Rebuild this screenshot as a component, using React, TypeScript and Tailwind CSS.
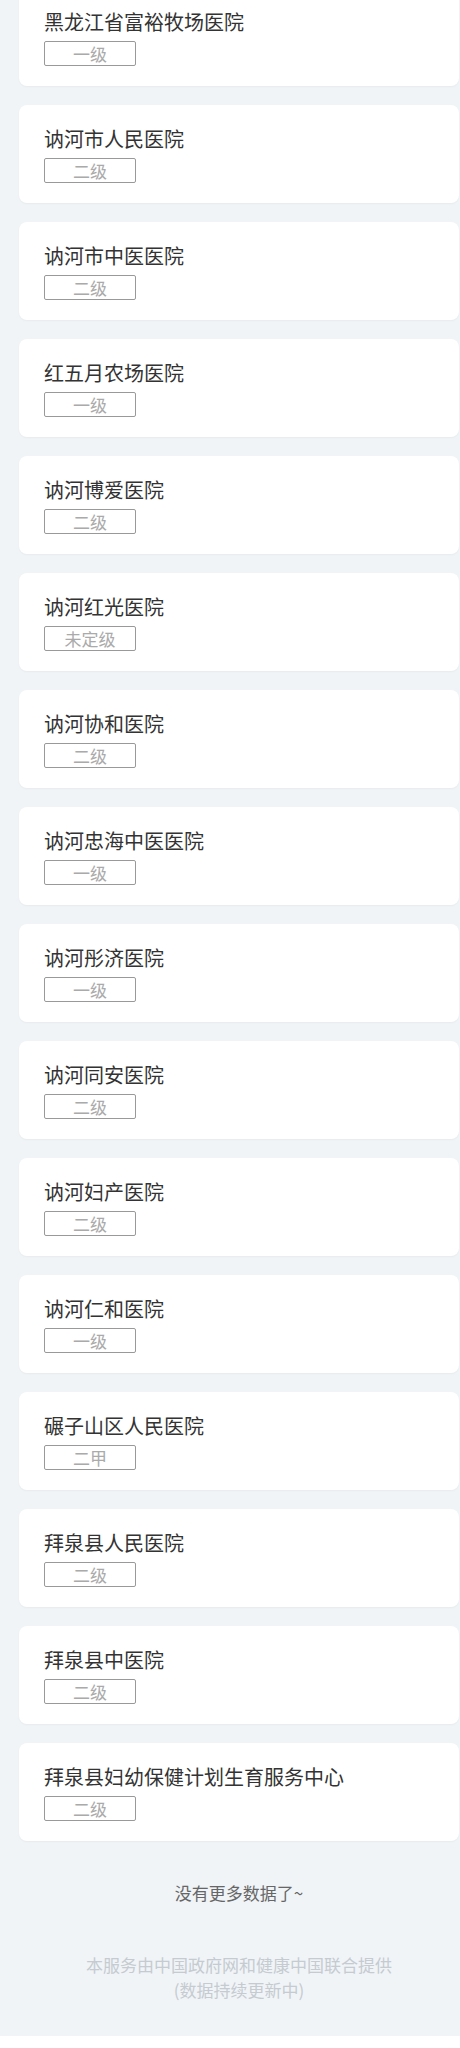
const hospitals = [
  { name: "黑龙江省富裕牧场医院", level: "一级" },
  { name: "讷河市人民医院", level: "二级" },
  { name: "讷河市中医医院", level: "二级" },
  { name: "红五月农场医院", level: "一级" },
  { name: "讷河博爱医院", level: "二级" },
  { name: "讷河红光医院", level: "未定级" },
  { name: "讷河协和医院", level: "二级" },
  { name: "讷河忠海中医医院", level: "一级" },
  { name: "讷河彤济医院", level: "一级" },
  { name: "讷河同安医院", level: "二级" },
  { name: "讷河妇产医院", level: "二级" },
  { name: "讷河仁和医院", level: "一级" },
  { name: "碾子山区人民医院", level: "二甲" },
  { name: "拜泉县人民医院", level: "二级" },
  { name: "拜泉县中医院", level: "二级" },
  { name: "拜泉县妇幼保健计划生育服务中心", level: "二级" },
];

const HospitalCard = ({ name, level }: { name: string; level: string }) => (
  <div className="flex flex-col items-start gap-[5px] rounded-lg bg-white pl-[25px] pr-4 pt-[20px] pb-[20px] shadow-[0_1px_2px_rgba(0,0,0,0.04)]">
    <p className="text-[20px] leading-[28px] text-[#333]">{name}</p>
    <span className="flex h-[25px] w-[92px] items-center justify-center rounded-[2px] border border-[#999] text-[17px] leading-none text-[#aaa]">
      {level}
    </span>
  </div>
);

export default function App() {
  return (
    <div
      className="min-h-[2048px] bg-[#f0f4f7] pl-[19px] pr-[1px]"
      style={{ fontFamily: '"Noto Sans CJK SC", "Noto Sans", sans-serif' }}
    >
      <div className="-mt-[12px] flex flex-col gap-[19px]">
        {hospitals.map((h) => (
          <HospitalCard key={h.name} name={h.name} level={h.level} />
        ))}
      </div>

      <p className="mt-[40px] text-center text-[17px] leading-[24px] text-[#666]">
        没有更多数据了~
      </p>

      <div className="mt-[47px] text-center text-[17px] leading-[25px] text-[#c5cbd0]">
        <p>本服务由中国政府网和健康中国联合提供</p>
        <p>(数据持续更新中)</p>
      </div>
    </div>
  );
}
